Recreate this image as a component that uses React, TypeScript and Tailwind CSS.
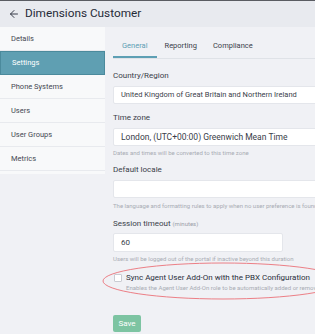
import { ArrowLeft } from 'lucide-react';

const navItems = ['Details', 'Settings', 'Phone Systems', 'Users', 'User Groups', 'Metrics'];
const tabs = ['General', 'Reporting', 'Compliance'];

function Label({ children }: { children: React.ReactNode }) {
  return <div className="text-[8px] leading-[12px] text-[#3a3e4a]">{children}</div>;
}

function Hint({ children }: { children: React.ReactNode }) {
  return <div className="text-[6px] leading-[9px] text-[#a8acb4] whitespace-nowrap">{children}</div>;
}

function Field({ value, className }: { value?: string; className?: string }) {
  return (
    <div
      className={`bg-white border border-[#e4e6eb] rounded-[2px] pl-[7px] flex items-center text-[#3a3e4a] whitespace-nowrap ${className ?? ''}`}
    >
      {value}
    </div>
  );
}

export default function App() {
  return (
    <div className="w-[315px] h-[334px] overflow-hidden bg-[#f0f1f5] font-['Roboto',sans-serif] relative">
      <div className="h-[27px] bg-[#e8eaef] border-t border-[#5a5c62] flex items-center pl-[8px] gap-[5px] text-[#262a38]">
        <ArrowLeft size={12} strokeWidth={1.8} />
        <span className="text-[11.8px] leading-none">Dimensions Customer</span>
      </div>

      <div className="flex">
        <div className="w-[105px] shrink-0 self-start bg-[#f8f9fa] pb-[3px]">
          {navItems.map(item => (
            <div
              key={item}
              className={
                item === 'Settings'
                  ? 'h-[24px] pl-[11px] flex items-center text-[7.5px] text-white bg-[#5f9fb2] border border-[#4b8a9c]'
                  : 'h-[24px] pl-[11px] flex items-center text-[7.5px] text-[#454852] border-b border-[#e8eaee]'
              }
            >
              {item}
            </div>
          ))}
        </div>

        <div className="flex-1 pl-[8px] min-w-0">
          <div className="flex border-b border-[#dfe2e7] w-[300px]">
            {tabs.map(tab => (
              <div
                key={tab}
                className={
                  tab === 'General'
                    ? 'px-[9px] pt-[13px] pb-[5px] text-[7.5px] leading-[11px] text-[#5d9fb4] border-b-2 border-[#5d9fb4]'
                    : 'px-[8px] pt-[13px] pb-[7px] text-[7.5px] leading-[11px] text-[#3a3e4a]'
                }
              >
                {tab}
              </div>
            ))}
          </div>

          <div className="mt-[11px]">
            <Label>Country/Region</Label>
            <Field
              value="United Kingdom of Great Britain and Northern Ireland"
              className="mt-[4px] h-[18px] w-[260px] text-[7.5px]"
            />
          </div>

          <div className="mt-[8px]">
            <Label>Time zone</Label>
            <Field
              value="London, (UTC+00:00) Greenwich Mean Time"
              className="mt-[4px] h-[18px] w-[260px] text-[8.5px]"
            />
            <div className="mt-[2px]">
              <Hint>Dates and times will be converted to this time zone</Hint>
            </div>
          </div>

          <div className="mt-[7px]">
            <Label>Default locale</Label>
            <Field className="mt-[4px] h-[18px] w-[260px]" />
            <div className="mt-[3px]">
              <Hint>The language and formatting rules to apply when no user preference is found</Hint>
            </div>
          </div>

          <div className="mt-[8px]">
            <Label>
              Session timeout <span className="text-[6px] text-[#9a9ea8]">(minutes)</span>
            </Label>
            <Field value="60" className="mt-[3px] h-[19px] w-[170px] text-[8px]" />
            <div className="mt-[2px]">
              <Hint>Users will be logged out of the portal if inactive beyond this duration</Hint>
            </div>
          </div>

          <div className="mt-[9px] flex gap-[4px] pl-[1px]">
            <div className="mt-[2px] w-[8px] h-[8px] bg-white border border-[#c9ccd3] rounded-[1px] shrink-0" />
            <div>
              <div className="text-[8px] leading-[11px] text-[#2a2e3b] whitespace-nowrap">
                Sync Agent User Add-On with the PBX Configuration
              </div>
              <Hint>Enables the Agent User Add-On role to be automatically added or removed</Hint>
            </div>
          </div>

          <button className="mt-[23px] h-[17px] w-[28px] rounded-[2px] bg-[#7dc4a2] text-white text-[8px] leading-none">
            Save
          </button>
        </div>
      </div>

      <svg className="absolute left-0 top-0 pointer-events-none" width="315" height="334">
        <ellipse cx="223" cy="281" rx="120" ry="18" fill="none" stroke="#ec7f86" strokeWidth="1" />
      </svg>
    </div>
  );
}
